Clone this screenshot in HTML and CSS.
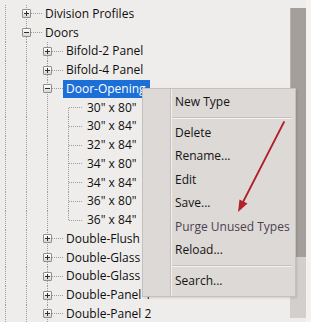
FILE: index.html
```html
<!DOCTYPE html>
<html>
<head>
<meta charset="utf-8">
<link rel="stylesheet" href="styles.css">
</head>
<body>
<div class="window">
  <div class="tree">
    <div class="row"><span class="g"></span><span class="own"><i class="box plus"></i></span><span class="label">Division Profiles</span></div>
    <div class="row"><span class="g"></span><span class="own"><i class="box minus"></i></span><span class="label">Doors</span></div>
    <div class="row"><span class="g"></span><span class="g"></span><span class="own"><i class="box plus"></i></span><span class="label">Bifold-2 Panel</span></div>
    <div class="row"><span class="g"></span><span class="g"></span><span class="own"><i class="box plus"></i></span><span class="label">Bifold-4 Panel</span></div>
    <div class="row"><span class="g"></span><span class="g"></span><span class="own"><i class="box minus"></i></span><span class="label sel">Door-Opening</span></div>
    <div class="row"><span class="g"></span><span class="g"></span><span class="g"></span><span class="own leaf first"></span><span class="label">30" x 80"</span></div>
    <div class="row"><span class="g"></span><span class="g"></span><span class="g"></span><span class="own leaf"></span><span class="label">30" x 84"</span></div>
    <div class="row"><span class="g"></span><span class="g"></span><span class="g"></span><span class="own leaf"></span><span class="label">32" x 84"</span></div>
    <div class="row"><span class="g"></span><span class="g"></span><span class="g"></span><span class="own leaf"></span><span class="label">34" x 80"</span></div>
    <div class="row"><span class="g"></span><span class="g"></span><span class="g"></span><span class="own leaf"></span><span class="label">34" x 84"</span></div>
    <div class="row"><span class="g"></span><span class="g"></span><span class="g"></span><span class="own leaf"></span><span class="label">36" x 80"</span></div>
    <div class="row"><span class="g"></span><span class="g"></span><span class="g"></span><span class="own leaf last"></span><span class="label">36" x 84"</span></div>
    <div class="row"><span class="g"></span><span class="g"></span><span class="own"><i class="box plus"></i></span><span class="label">Double-Flush</span></div>
    <div class="row"><span class="g"></span><span class="g"></span><span class="own"><i class="box plus"></i></span><span class="label">Double-Glass 1</span></div>
    <div class="row"><span class="g"></span><span class="g"></span><span class="own"><i class="box plus"></i></span><span class="label">Double-Glass 2</span></div>
    <div class="row"><span class="g"></span><span class="g"></span><span class="own"><i class="box plus"></i></span><span class="label">Double-Panel 1</span></div>
    <div class="row"><span class="g"></span><span class="g"></span><span class="own"><i class="box plus"></i></span><span class="label">Double-Panel 2</span></div>
  </div>
  <div class="scroll"><div class="thumb"></div></div>
  <div class="edge"></div>

  <div class="menu">
    <div class="item">New Type</div>
    <div class="sep"></div>
    <div class="item">Delete</div>
    <div class="item">Rename...</div>
    <div class="item">Edit</div>
    <div class="item">Save...</div>
    <div class="item purge">Purge Unused Types</div>
    <div class="item">Reload...</div>
    <div class="sep"></div>
    <div class="item">Search...</div>
  </div>

  <svg class="arrow" width="311" height="322" viewBox="0 0 311 322">
    <line x1="284" y1="122" x2="242" y2="204" stroke="#b3202a" stroke-width="1.8" stroke-linecap="round"/>
    <polygon points="238,212 247.5,203.5 239.5,199.5" fill="#b3202a"/>
  </svg>
</div>
</body>
</html>
```

FILE: styles.css
```css
html, body {
  margin: 0;
  padding: 0;
}
body {
  font-family: "Open Sans", "Noto Sans", sans-serif;
  font-size: 12px;
  color: #0e0e0e;
}
.window {
  position: relative;
  display: flex;
  width: 311px;
  height: 322px;
  overflow: hidden;
  background: #efedeb;
}
.tree {
  flex: 0 0 290px;
  width: 290px;
  padding-top: 4.6px;
  overflow: hidden;
  box-sizing: border-box;
}
.row {
  display: flex;
  align-items: center;
  height: 18.75px;
  white-space: nowrap;
}
.g, .own {
  flex: 0 0 21px;
  align-self: stretch;
  display: flex;
  align-items: center;
}
.g {
  background: repeating-linear-gradient(to bottom, #9c9c9c 0 1px, transparent 1px 2px) 5px 0 / 1px 100% no-repeat;
}
.own {
  background:
    repeating-linear-gradient(to bottom, #9c9c9c 0 1px, transparent 1px 2px) 5px 0 / 1px 100% no-repeat,
    repeating-linear-gradient(to right, #9c9c9c 0 1px, transparent 1px 2px) 10px 50% / 11px 1px no-repeat;
}
.own.leaf {
  background:
    repeating-linear-gradient(to bottom, #9c9c9c 0 1px, transparent 1px 2px) 5px 0 / 1px 100% no-repeat,
    repeating-linear-gradient(to right, #9c9c9c 0 1px, transparent 1px 2px) 6px 50% / 14px 1px no-repeat;
}
.own.leaf.first {
  background:
    repeating-linear-gradient(to bottom, #9c9c9c 0 1px, transparent 1px 2px) 5px 100% / 1px 50% no-repeat,
    repeating-linear-gradient(to right, #9c9c9c 0 1px, transparent 1px 2px) 6px 50% / 14px 1px no-repeat;
}
.own.leaf.last {
  background:
    repeating-linear-gradient(to bottom, #9c9c9c 0 1px, transparent 1px 2px) 5px 0 / 1px 50% no-repeat,
    repeating-linear-gradient(to right, #9c9c9c 0 1px, transparent 1px 2px) 6px 50% / 14px 1px no-repeat;
}
.box {
  display: block;
  width: 9px;
  height: 9px;
  margin-left: 1px;
  box-sizing: border-box;
  border: 1px solid #8f8f8f;
  border-radius: 1px;
}
.box.plus {
  background:
    linear-gradient(#2e2e2e, #2e2e2e) center / 5px 1px no-repeat,
    linear-gradient(#2e2e2e, #2e2e2e) center / 1px 5px no-repeat,
    linear-gradient(#ffffff, #d6d6d6);
}
.box.minus {
  background:
    linear-gradient(#2e2e2e, #2e2e2e) center / 5px 1px no-repeat,
    linear-gradient(#ffffff, #d6d6d6);
}
.label {
  margin-left: 3px;
  line-height: 18px;
}
.label.sel {
  margin-left: 0;
  padding: 0 4px 0 3px;
  background: #1d6fd8;
  color: #ffffff;
}
.scroll {
  flex: 0 0 16px;
  margin: 8px 0 4px;
  background: #d3cfcc;
  display: flex;
  flex-direction: column;
}
.thumb {
  height: 249px;
  background: #a49f9b;
  border-left: 1px solid #b8b3af;
}
.edge {
  flex: 1;
  background: #f3f2f0;
}
.menu {
  position: absolute;
  left: 142px;
  top: 88px;
  width: 154px;
  height: 209px;
  box-sizing: border-box;
  padding-top: 1px;
  border: 1px solid #c4c0bc;
  background:
    linear-gradient(to right, transparent 27px, #c3c0bd 27px 28px, #f4f2f0 28px 29px, transparent 29px),
    #dcd9d6;
  box-shadow: 1px 1px 2px rgba(0, 0, 0, 0.12);
}
.item {
  height: 23.5px;
  line-height: 23.5px;
  padding-left: 32px;
  white-space: nowrap;
  color: #141414;
}
.item.purge {
  color: #4c3f52;
}
.sep {
  height: 7px;
  margin-left: 29px;
  margin-right: 3px;
  background:
    linear-gradient(to bottom, transparent 3px, #c3c0bd 3px 4px, #f4f2f0 4px 5px, transparent 5px);
}
.arrow {
  position: absolute;
  left: 0;
  top: 0;
  pointer-events: none;
}
```
